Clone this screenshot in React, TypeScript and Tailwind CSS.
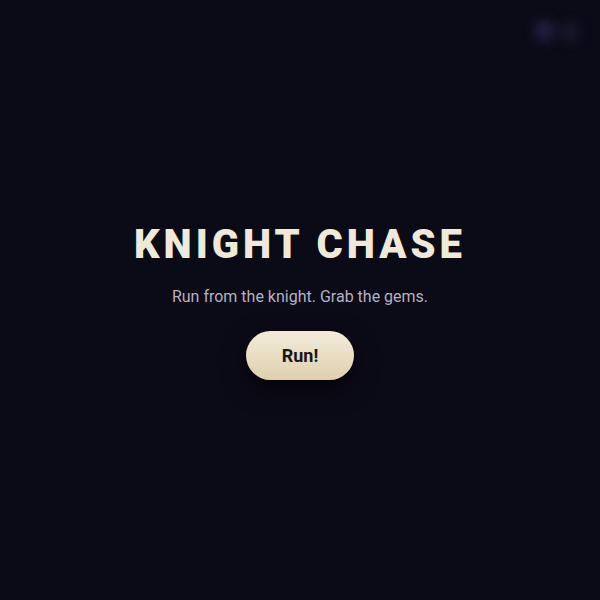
import React from 'react';

export default function App() {
  return (
    <div className="relative h-[600px] w-[600px] overflow-hidden bg-[#0b0a17] font-['Roboto',sans-serif]">
      {/* blurry corner glows */}
      <div className="absolute left-[534px] top-[20px] h-[22px] w-[22px] rounded-full bg-[#2a2850]/70 blur-[6px]"></div>
      <div className="absolute left-[560px] top-[22px] h-[20px] w-[20px] rounded-full bg-[#24223a]/60 blur-[6px]"></div>

      <div className="flex h-full flex-col items-center justify-center pt-[4px]">
        <h1 className="text-[40px] font-black leading-none tracking-[0.1em] text-[#efe9dc]">KNIGHT CHASE</h1>
        <p className="mt-[24px] text-[16px] leading-none text-[#b5b1c2]">Run from the knight. Grab the gems.</p>
        <button className="mt-[26px] h-[49px] w-[108px] rounded-full bg-gradient-to-b from-[#f3ecdb] to-[#dfcfae] text-[18px] font-bold text-[#1a1714] shadow-[0_8px_24px_rgba(0,0,0,0.6)]">
          Run!
        </button>
      </div>
    </div>
  );
}
